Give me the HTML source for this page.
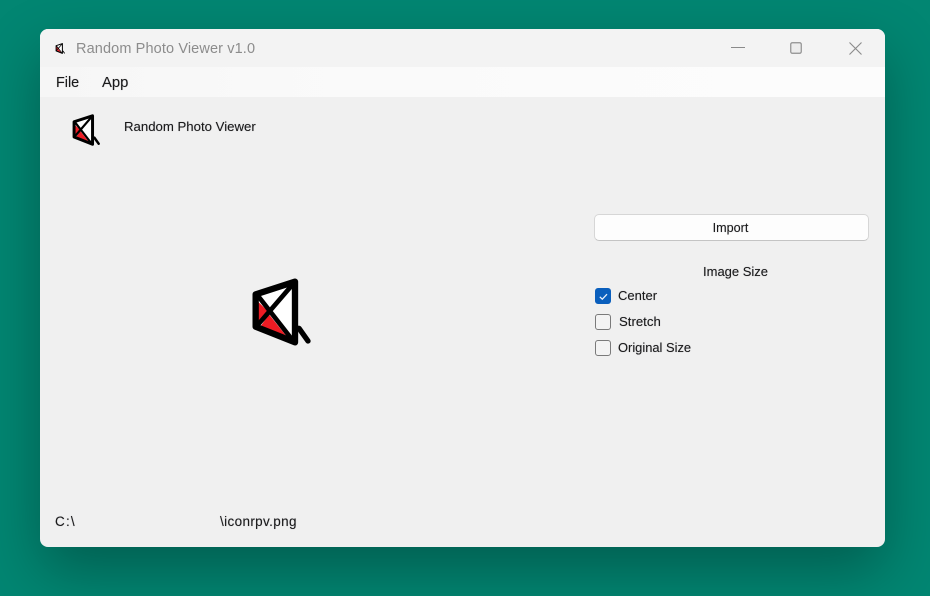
<!DOCTYPE html>
<html>
<head>
<meta charset="utf-8">
<style>
html,body{margin:0;padding:0;width:930px;height:596px;overflow:hidden;background:#028672;font-family:"Liberation Sans",sans-serif;}
.win{position:absolute;left:40px;top:29px;width:845px;height:518px;border-radius:8px;background:#f0f0f0;overflow:hidden;}
.shadow{position:absolute;left:40px;top:29px;width:845px;height:518px;border-radius:8px;box-shadow:0 24px 60px rgba(0,0,0,.3);}
.title{position:absolute;left:0;top:0;width:845px;height:38px;background:#f3f3f3;}
.menu{position:absolute;left:0;top:38px;width:845px;height:30px;background:linear-gradient(90deg,#f6f6f6 0,#f9f9f9 25%,#fbfbfb 60%,#fcfcfc 100%);}
.t{position:absolute;white-space:nowrap;color:#1a1a1a;line-height:16px;text-shadow:0 0 .7px rgba(20,20,40,.45);}
.cb{position:absolute;left:595px;width:14px;height:14px;border:1.5px solid #7a7a7a;border-radius:3px;background:#f3f3f3;box-sizing:content-box;}
.btn{position:absolute;left:594px;top:214px;width:273px;height:25px;background:#fdfdfd;border:1px solid #d6d6d6;border-bottom-color:#c4c4c4;border-radius:5px;}
svg{position:absolute;overflow:visible;}
</style>
</head>
<body>
<div class="shadow"></div>
<div class="win">
  <div class="title"></div>
  <div class="menu"></div>
</div>

<svg width="0" height="0" style="left:0;top:0">
  <defs>
    <g id="ic">
      <polygon points="77,88 195,50 195,232 77,185" fill="#fff"/>
      <polygon points="82,108 114,139 82,176" fill="#ee1c24"/>
      <polygon points="117,148 176,222 86,192" fill="#ee1c24"/>
      <path d="M77,88 L195,50 L195,232 L77,185 Z" fill="none" stroke="#000" stroke-width="19" stroke-linejoin="round"/>
      <path d="M85,94 L188,226 M195,50 L78,186" fill="none" stroke="#000" stroke-width="14" stroke-linecap="round"/>
      <path d="M207,190 L234,228" fill="none" stroke="#000" stroke-width="16" stroke-linecap="round"/>
    </g>
  </defs>
</svg>

<svg style="left:52.3px;top:40.8px" width="16" height="15.2" viewBox="0 0 300 285"><use href="#ic"/></svg>
<svg style="left:62px;top:108.4px" width="47" height="44.6" viewBox="0 0 300 285"><use href="#ic"/></svg>
<svg style="left:230px;top:265px" width="100" height="95" viewBox="0 0 300 285"><use href="#ic"/></svg>

<div class="t" style="left:76px;top:41px;font-size:14.5px;color:#8c8c8c;text-shadow:none;letter-spacing:.12px">Random Photo Viewer v1.0</div>
<div class="t" style="left:56px;top:75px;font-size:14.4px">File</div>
<div class="t" style="left:102px;top:75px;font-size:14.8px">App</div>
<div class="t" style="left:124px;top:119px;font-size:13.2px">Random Photo Viewer</div>

<svg style="left:731px;top:47px" width="14" height="2"><rect width="14" height="1" fill="#8a8a8a"/></svg>
<svg style="left:790px;top:42px" width="12" height="12"><rect x=".75" y=".75" width="10.5" height="10.5" rx="1.5" fill="#ececec" stroke="#8f8f8f" stroke-width="1.2"/></svg>
<svg style="left:849px;top:42px" width="13" height="13"><path d="M.5,.5 L12.5,12.5 M12.5,.5 L.5,12.5" stroke="#8a8a8a" stroke-width="1.1" fill="none"/></svg>

<div class="btn"></div>
<div class="t" style="left:594px;top:220px;width:273px;text-align:center;font-size:12.6px">Import</div>
<div class="t" style="left:703px;top:264px;font-size:13px">Image Size</div>

<div class="cb" style="top:287.5px;background:#0a5fbd;border-color:#0a5fbd"></div>
<svg style="left:595px;top:287.5px" width="17" height="17"><path d="M4.8,8.8 L7.3,11.2 L12,6.2" fill="none" stroke="#e8f0fa" stroke-width="1.3"/></svg>
<div class="cb" style="top:313.5px"></div>
<div class="cb" style="top:339.5px"></div>
<div class="t" style="left:618px;top:288px;font-size:13px">Center</div>
<div class="t" style="left:619px;top:314px;font-size:13.2px">Stretch</div>
<div class="t" style="left:618px;top:340px;font-size:12.9px">Original Size</div>

<div class="t" style="left:55px;top:514px;font-size:13.5px;letter-spacing:1.2px">C:\</div>
<div class="t" style="left:220px;top:514px;font-size:13.5px;letter-spacing:.36px">\iconrpv.png</div>
</body>
</html>
